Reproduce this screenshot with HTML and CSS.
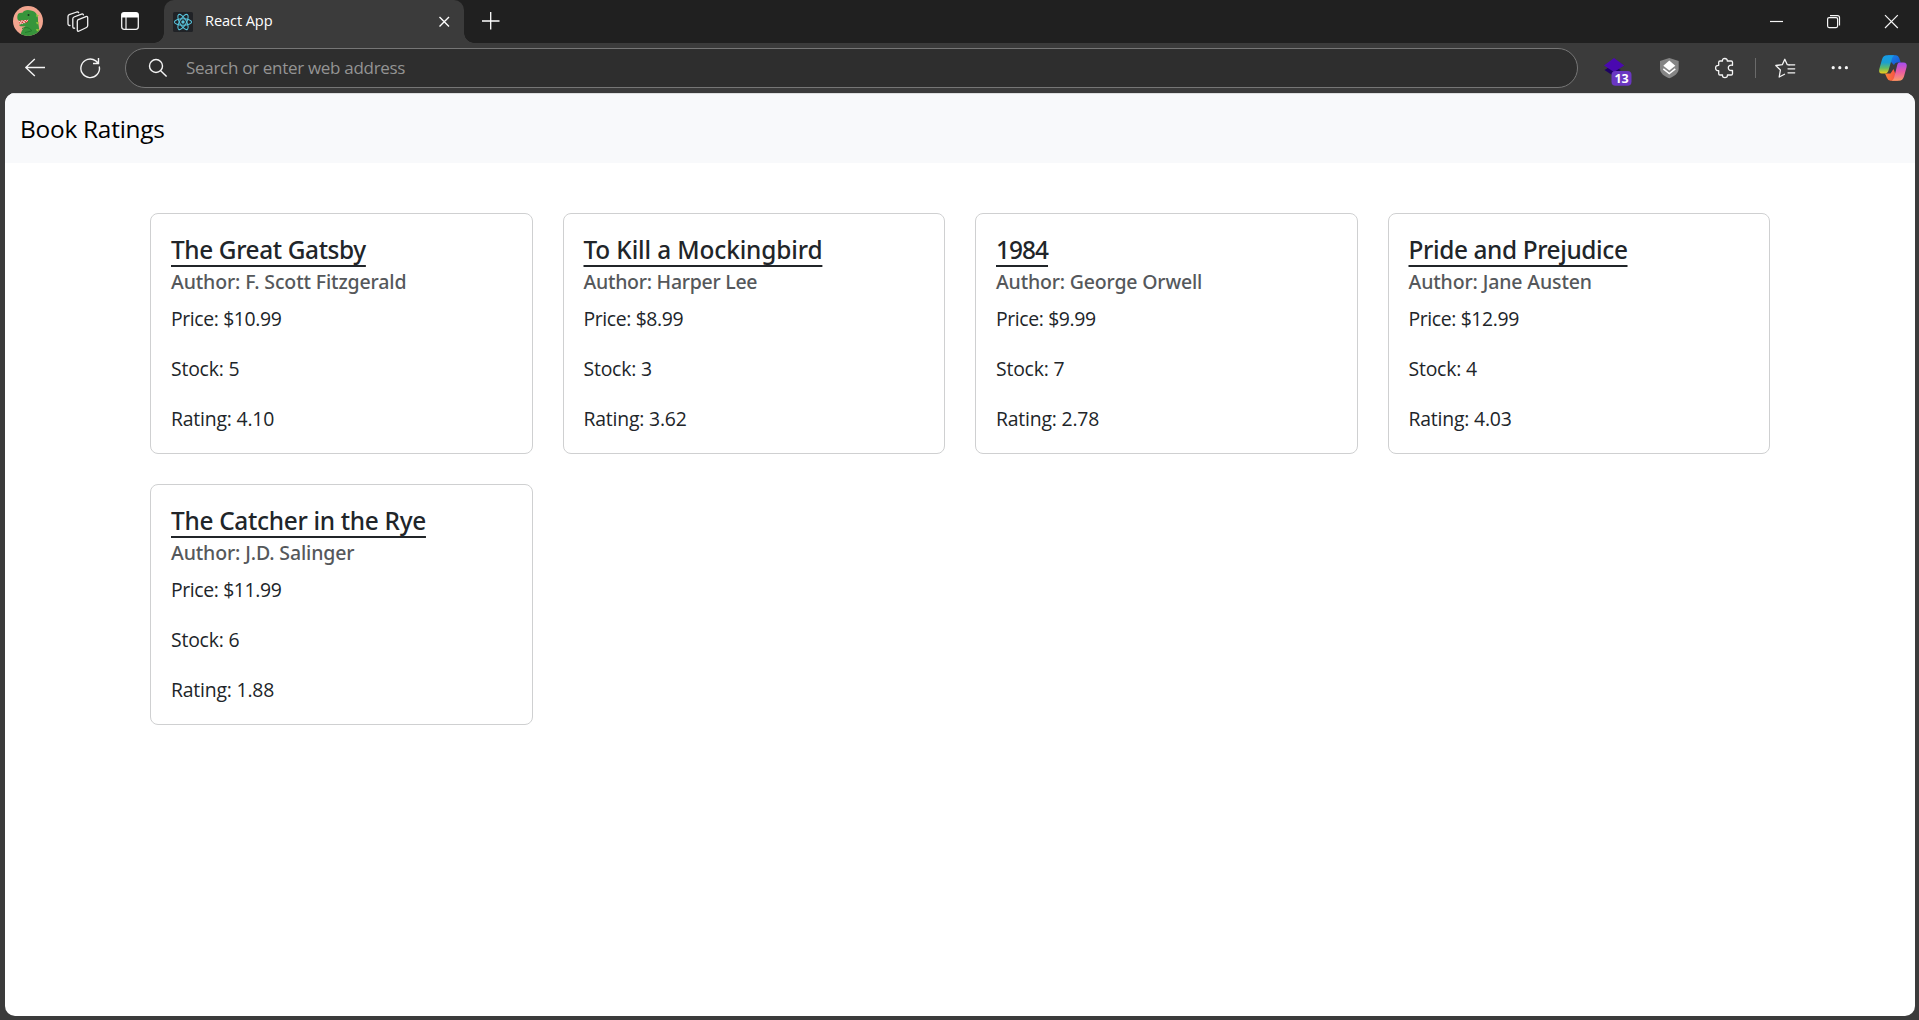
FILE: index.html
```
<!DOCTYPE html>
<html lang="en">
<head>
<meta charset="utf-8">
<title>React App</title>
<link rel="stylesheet" href="styles.css">
</head>
<body>
<header class="tabstrip">
  <svg class="avatar" width="30" height="43" viewBox="13 0 30 43">
    <defs><clipPath id="face"><circle cx="28" cy="21" r="15"/></clipPath></defs>
    <g clip-path="url(#face)">
      <rect x="13" y="6" width="30" height="30" fill="#f2a58f"/>
      <path d="M17.5 15.5C18 13 20 12.5 22.500 12.800C24 9.500 28.500 9.500 31 10.500C36.500 11.500 38.500 16 38 21C38.500 26 40 30 39 36H20.500C21 31 23 28 25.500 26.500L20.500 26.300C19.500 26 19.200 25 19.500 24.200L28 21.500L28 20L19 21C17.300 20 17 17.500 17.500 15.500Z" fill="#37953b"/>
      <path d="M22 28.500C26 26.500 31 28 31.500 31L25 32.500" fill="none" stroke="#257a2d" stroke-width="1"/>
      <path d="M19 20.800L28 19.800V22L20 24.500Z" fill="#d63b2f"/>
      <path d="M19 20.800L20.500 22.500L22 20.500L23.500 22L25 20.200L26.500 21.500L28 19.800M20 24.500L21.200 22.800L22.500 23.700L23.800 22.300L25.200 23" fill="none" stroke="#fff" stroke-width=".8"/>
      <circle cx="28.500" cy="15" r="1" fill="#15351b"/>
      <path d="M36 14l3 1.500-2.500 1.500zM36 22l3.500.5-2.500 2zM36 29l4 .5-3 2z" fill="#92c83d"/>
    </g>
  </svg>
  <svg class="workspaces" width="22" height="43" viewBox="67 0 22 43" fill="none" stroke="#f1f1f1" stroke-width="1.300" stroke-linejoin="round" stroke-linecap="round">
    <path d="M77.800 19.800L85.900 16.600Q87.700 16 87.700 17.800V25.500Q87.700 26.900 86.500 27.500L79.200 31Q77.300 31.800 77.300 29.800V21.200Q77.300 20 78.500 19.500Z"/>
    <path d="M74.600 28.200Q72.800 28.500 72.800 26.500V18.800Q72.800 17.500 74 17L81.500 14.100Q83.200 13.600 83.400 14.900"/>
    <path d="M70 25.500Q68 25.600 68 23.500V16.500Q68 15.200 69.200 14.700L76.800 12Q78.300 11.600 78.700 12.700"/>
  </svg>
  <svg class="tab-menu" width="20" height="43" viewBox="120 0 20 43">
    <rect x="121.700" y="12.700" width="16.600" height="16.600" rx="2.500" fill="none" stroke="#f4f4f4" stroke-width="1.300"/>
    <path d="M121.500 17.500V15Q121.500 12.500 124 12.500H136Q138.500 12.500 138.500 15V17.500Z" fill="#fff"/>
    <path d="M126 17V29" stroke="#f4f4f4" stroke-width="1.200"/>
  </svg>
  <div class="tab">
    <svg class="favicon" width="20" height="20" viewBox="0 0 20 20">
      <rect width="20" height="20" rx="1.500" fill="#202226"/>
      <g fill="none" stroke="#58c4dc" stroke-width="1.050">
        <ellipse cx="10" cy="10" rx="8.600" ry="3.300"/>
        <ellipse cx="10" cy="10" rx="8.600" ry="3.300" transform="rotate(60 10 10)"/>
        <ellipse cx="10" cy="10" rx="8.600" ry="3.300" transform="rotate(120 10 10)"/>
      </g>
      <circle cx="10" cy="10" r="1.700" fill="#58c4dc"/>
    </svg>
    <span class="tab-title">React App</span>
    <svg width="12" height="43" viewBox="438 0 12 43"><path d="M439.500 17L449 26.500M449 17L439.500 26.500" stroke="#fff" stroke-width="1.400"/></svg>
  </div>
  <svg class="new-tab" width="18" height="43" viewBox="482 0 18 43"><path d="M482 21H499.500M490.700 12V29.500" stroke="#fff" stroke-width="1.300"/></svg>
  <svg class="window-buttons" width="130" height="43" viewBox="1769 0 130 43" fill="none" stroke="#f6f6f6" stroke-width="1.200">
    <path d="M1770 21.500H1783"/>
    <rect x="1827.600" y="17.600" width="10" height="10" rx="1.500"/>
    <path d="M1830 15.600H1837.500Q1839.500 15.600 1839.500 17.600V25.500"/>
    <path d="M1885 15.200L1897.800 28M1897.800 15.200L1885 28"/>
  </svg>
</header>

<div class="toolbar">
  <svg width="21" height="50" viewBox="25 43 21 50" fill="none" stroke="#f4f4f4" stroke-width="1.400" stroke-linejoin="round"><path d="M45 67.500H25.800M34.800 59L25.800 67.500L34.800 76"/></svg>
  <svg class="reload" width="22" height="50" viewBox="79 43 22 50" fill="none" stroke="#f4f4f4" stroke-width="1.400"><path d="M99.300 66.500A9.300 9.300 0 1 1 95.800 60.900L98.300 63.200M98.500 58V63.500H93"/></svg>
  <div class="omnibox">
    <svg width="20" height="38" viewBox="148 49 20 38" fill="none" stroke="#f4f4f4" stroke-width="1.400"><circle cx="156" cy="66" r="6.500"/><path d="M160.700 70.700L166.600 76.600"/></svg>
    <span>Search or enter web address</span>
  </div>
  <svg class="extension" width="30" height="50" viewBox="1603 43 30 50">
    <path d="M1604.500 70L1611 66L1621 70L1612 75Z" fill="#1d0063"/>
    <path d="M1614 58L1624.200 65.500L1614 72L1604 65.500Z" fill="#4a08b0"/>
    <rect x="1611.500" y="71" width="20" height="14.700" rx="4" fill="#6a37c2"/>
    <text class="badge" x="1621.600" y="82.900" text-anchor="middle">13</text>
  </svg>
  <svg class="shield" width="20" height="50" viewBox="1659 43 20 50">
    <path d="M1669.300 58L1678.700 61V68.500C1678.700 73 1674.500 76.500 1669.300 78.200C1664 76.500 1660 73 1660 68.500V61Z" fill="#858585"/>
    <path d="M1669.300 60.500L1675.300 65.700L1669.300 70.500L1663.300 65.700Z" fill="#fff"/>
    <path d="M1663.300 68.800L1669.300 73.500L1675.300 68.800" fill="none" stroke="#fff" stroke-width="1.500"/>
  </svg>
  <svg class="puzzle" width="20" height="50" viewBox="1714 43 20 50" fill="none" stroke="#f4f4f4" stroke-width="1.300" stroke-linejoin="round">
    <path d="M1720 61H1722.500C1722.200 59.500 1723 58.500 1724.800 58.500S1727.500 59.500 1727.200 61H1731.200Q1732.500 61 1732.500 62.300V65.300C1729.500 64.800 1728.300 66 1728.300 67.800S1729.500 71 1732.500 70.300V73.800Q1732.500 75 1731.200 75H1727.400C1727.500 76.800 1726.700 77.600 1724.900 77.600S1722.300 76.800 1722.500 75H1720Q1718.700 75 1718.700 73.700V70.700C1716.500 70.800 1715.600 69.700 1715.600 67.900S1716.500 65.200 1718.700 65.300V62.300Q1718.700 61 1720 61"/>
  </svg>
  <span class="divider"></span>
  <svg class="favorites" width="22" height="50" viewBox="1774 43 22 50" fill="none" stroke="#f4f4f4" stroke-width="1.300" stroke-linejoin="round" stroke-linecap="round">
    <path d="M1789 64.900L1787.300 64.700L1784.800 59.300L1782.300 64.700L1775.800 65.500L1780.400 70L1779.200 77L1784.500 74.200"/>
    <path d="M1789 64.800H1794.700M1788 68.800H1794.700M1788 72.800H1794.700"/>
  </svg>
  <svg class="more" width="20" height="50" viewBox="1830 43 20 50" fill="#f6f6f6"><circle cx="1833.200" cy="67.700" r="1.600"/><circle cx="1839.800" cy="67.700" r="1.600"/><circle cx="1846.400" cy="67.700" r="1.600"/></svg>
  <svg class="copilot" width="30" height="50" viewBox="1878 43 30 50">
    <defs>
      <linearGradient id="cool" x1="0" y1="0" x2="0" y2="1"><stop offset="0" stop-color="#169be8"/><stop offset=".4" stop-color="#1b9fd0"/><stop offset=".7" stop-color="#62bb65"/><stop offset="1" stop-color="#f2cd18"/></linearGradient>
      <linearGradient id="warm" x1="0" y1="0" x2="0" y2="1"><stop offset="0" stop-color="#a34df0"/><stop offset=".5" stop-color="#e95aa5"/><stop offset="1" stop-color="#fb9a68"/></linearGradient>
      <linearGradient id="deep" x1="0" y1="0" x2="1" y2="1"><stop offset="0" stop-color="#168bea"/><stop offset="1" stop-color="#1c4cd0"/></linearGradient>
      <linearGradient id="ember" x1="0" y1="0" x2="1" y2="0"><stop offset="0" stop-color="#ff8435"/><stop offset="1" stop-color="#f0464a"/></linearGradient>
    </defs>
    <path d="M1888 55.300H1896Q1898.300 55.300 1899.200 58L1900.700 62.500H1897Q1894.800 62.500 1894 65L1891 62Z" fill="url(#deep)"/>
    <path d="M1885 73.500H1890.500L1893.500 69L1898 80.700H1890.500Q1888 80.700 1887 78Z" fill="url(#ember)"/>
    <path d="M1887 55.300H1894.500Q1892.800 55.800 1892.100 58L1888.500 70.500Q1887.500 73.500 1885 73.500H1882Q1878.300 73.500 1879.300 69L1882 59.500Q1883.300 55.300 1887 55.300Z" fill="url(#cool)"/>
    <path d="M1898.500 62.500H1903.500Q1907.500 62.500 1906.600 67L1904 76.500Q1902.700 80.700 1899 80.700H1891.500Q1893.200 80.200 1894 78L1897 66Q1897.500 62.500 1899.500 62.500Z" fill="url(#warm)"/>
  </svg>
</div>

<main class="page">
  <nav class="navbar"><span class="brand">Book Ratings</span></nav>
  <section class="books">
    <article class="card"><h5>The Great Gatsby</h5><h6>Author: F. Scott Fitzgerald</h6><p class="price">Price: $10.99</p><p>Stock: 5</p><p>Rating: 4.10</p></article>
    <article class="card"><h5>To Kill a Mockingbird</h5><h6>Author: Harper Lee</h6><p class="price">Price: $8.99</p><p>Stock: 3</p><p>Rating: 3.62</p></article>
    <article class="card"><h5>1984</h5><h6>Author: George Orwell</h6><p class="price">Price: $9.99</p><p>Stock: 7</p><p>Rating: 2.78</p></article>
    <article class="card"><h5>Pride and Prejudice</h5><h6>Author: Jane Austen</h6><p class="price">Price: $12.99</p><p>Stock: 4</p><p>Rating: 4.03</p></article>
    <article class="card"><h5>The Catcher in the Rye</h5><h6>Author: J.D. Salinger</h6><p class="price">Price: $11.99</p><p>Stock: 6</p><p>Rating: 1.88</p></article>
  </section>
</main>
</body>
</html>
```
FILE: styles.css
```
* { box-sizing: border-box; margin: 0; }

body {
  height: 1020px;
  display: flex;
  flex-direction: column;
  overflow: hidden;
  background: #3b3b3b;
  font-family: "Open Sans", "Noto Sans", sans-serif;
}

svg { display: block; flex: none; }

/* Tab strip */
.tabstrip {
  height: 43px;
  flex: none;
  display: flex;
  padding-left: 13px;
  background: #202020;
}
.workspaces { margin-left: 24px; }
.tab-menu { margin-left: 31px; }
.tab {
  position: relative;
  width: 300px;
  margin-left: 24px;
  padding: 0 14px 0 9px;
  display: flex;
  align-items: center;
  background: #3b3b3b;
  border-radius: 10px 10px 0 0;
}
.tab::before,
.tab::after {
  content: "";
  position: absolute;
  bottom: 0;
  width: 10px;
  height: 10px;
}
.tab::before {
  left: -10px;
  background: radial-gradient(circle at 0 0, transparent 9.5px, #3b3b3b 10px);
}
.tab::after {
  right: -10px;
  background: radial-gradient(circle at 100% 0, transparent 9.5px, #3b3b3b 10px);
}
.tab-title {
  flex: 1;
  padding-left: 12px;
  font-size: 14.600px;
  line-height: 20px;
  letter-spacing: -0.1px;
  color: #fff;
  margin-top: -4px;
}
.new-tab { margin-left: 18px; }
.window-buttons { margin-left: auto; margin-right: 20px; }

/* Toolbar */
.toolbar {
  height: 50px;
  flex: none;
  display: flex;
  align-items: center;
  padding-left: 25px;
}
.reload { margin-left: 33px; }
.omnibox {
  width: 1453px;
  height: 40px;
  margin-left: 24px;
  padding-left: 22px;
  display: flex;
  align-items: center;
  border: 1px solid #767676;
  border-radius: 20px;
  background: #2e2e2e;
  color: #949494;
  font-size: 17px;
  letter-spacing: -0.3px;
}
.omnibox span { padding-left: 18px; margin-top: -1px; }
.extension { margin-left: 25px; }
.badge { font: 700 12.500px "Open Sans", sans-serif; letter-spacing: 0; fill: #fff; }
.shield { margin-left: 26px; }
.puzzle { margin-left: 35px; }
.divider { width: 1px; height: 20px; margin-left: 21px; background: #6a6a6a; }
.favorites { margin-left: 18px; }
.more { margin-left: 34px; }
.copilot { margin-left: 28px; }

/* Page */
.page {
  flex: 1;
  margin: 0 4px 4px 5px;
  overflow: hidden;
  border-radius: 10px;
  background: #fff;
  color: #212529;
}
.navbar {
  height: 70px;
  padding: 16px 15px 0;
  border-top: 1px solid #dedfe0;
  background: #f8f9fb;
}
.brand {
  font-size: 24.400px;
  line-height: 38px;
  letter-spacing: -0.24px;
  color: #000;
}
.books {
  display: grid;
  grid-template-columns: repeat(4, 1fr);
  gap: 30px;
  padding: 50px 145px 0;
}
.card {
  height: 241px;
  padding: 21px 20px 19px;
  border: 1px solid #cfd0d1;
  border-radius: 8px;
}
.card h5 {
  font: 500 24.400px/30px "Noto Sans", sans-serif;
  letter-spacing: -0.38px;
  text-decoration: underline 2px;
  text-underline-offset: 6px;
  text-decoration-skip-ink: none;
}
.card:nth-child(2) h5 { letter-spacing: -0.13px; }
.card:nth-child(3) h5 { letter-spacing: -0.950px; }
.card:nth-child(5) h5 { letter-spacing: -0.3px; }
.card h6 {
  margin: 5px 0 10px;
  font: 500 19.500px/24px "Noto Sans", sans-serif;
  letter-spacing: -0.130px;
  color: #55585b;
}
.card:nth-child(2) h6 { letter-spacing: -0.27px; }
.card:nth-child(3) h6 { letter-spacing: -0.18px; }
.card p {
  font-size: 19.400px;
  line-height: 30px;
  letter-spacing: -0.2px;
}
.card .price { letter-spacing: -0.38px; }
.card p + p { margin-top: 20px; }
```
